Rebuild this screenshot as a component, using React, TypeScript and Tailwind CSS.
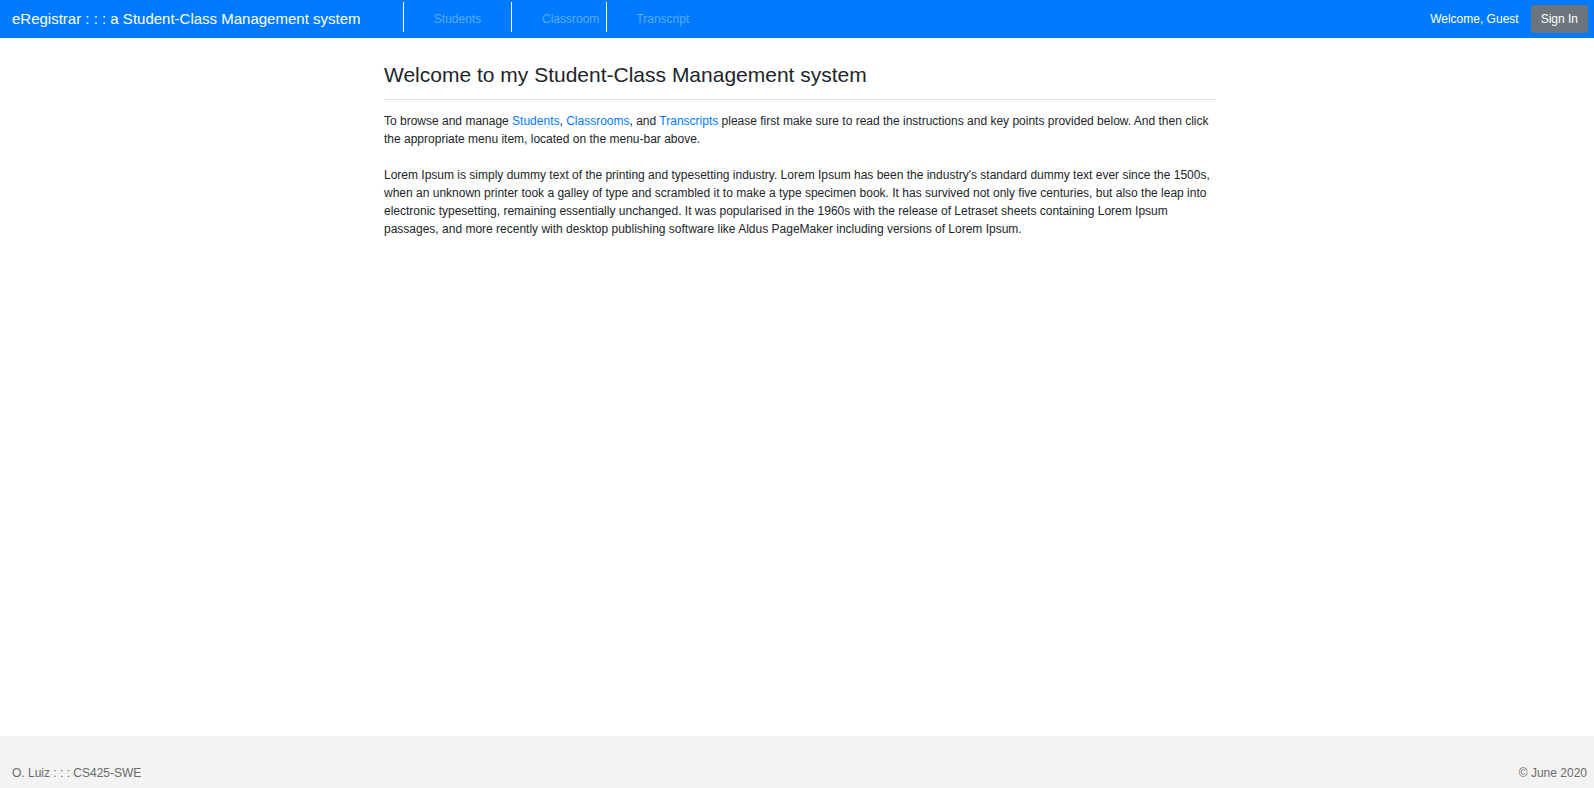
import React from "react";

export default function App() {
  const font = { fontFamily: '"Liberation Sans", Arial, sans-serif' };
  return (
    <div className="flex min-h-screen flex-col bg-white text-[#212529]" style={font}>
      <nav className="flex h-[38px] items-center bg-[#007bff]">
        <div className="w-[403px] pl-[12px] text-[15px] leading-[20px] text-white">
          eRegistrar : : : a Student-Class Management system
        </div>
        <div className="h-[30px] w-px self-start mt-[2px] bg-white" />
        <a className="w-[107px] text-center text-[12px] leading-[18px] text-[#5aa9ff]">Students</a>
        <div className="h-[30px] w-px self-start mt-[2px] bg-white" />
        <a className="pl-[30px] pr-[7px] text-[12px] leading-[18px] text-[#5aa9ff]">Classroom</a>
        <div className="h-[30px] w-px self-start mt-[2px] bg-white" />
        <a className="pl-[29px] text-[12px] leading-[18px] text-[#5aa9ff]">Transcript</a>
        <div className="ml-auto flex items-center gap-[12px] pr-[6px]">
          <span className="text-[12px] leading-[18px] text-white">Welcome, Guest</span>
          <button className="flex h-[28px] items-center rounded-[3px] bg-[#6c757d] px-[10px] text-[12px] text-white">
            Sign In
          </button>
        </div>
      </nav>

      <main className="flex-1">
        <div className="ml-[384px] w-[832px] pt-[25px]">
          <h1 className="text-[21px] leading-[24px] text-[#212529]">
            Welcome to my Student-Class Management system
          </h1>
          <hr className="mt-[12px] border-t border-[#e2e2e2]" />
          <p className="mt-[12px] text-[12px] leading-[18px]">
            To browse and manage <a className="text-[#007bff]">Students</a>,{" "}
            <a className="text-[#007bff]">Classrooms</a>, and{" "}
            <a className="text-[#007bff]">Transcripts</a> please first make sure to read the instructions and key
            points provided below. And then click the appropriate menu item, located on the menu-bar above.
          </p>
          <p className="mt-[18px] text-[12px] leading-[18px]">
            Lorem Ipsum is simply dummy text of the printing and typesetting industry. Lorem Ipsum has been the
            industry's standard dummy text ever since the 1500s, when an unknown printer took a galley of type and
            scrambled it to make a type specimen book. It has survived not only five centuries, but also the leap into
            electronic typesetting, remaining essentially unchanged. It was popularised in the 1960s with the release
            of Letraset sheets containing Lorem Ipsum passages, and more recently with desktop publishing software like
            Aldus PageMaker including versions of Lorem Ipsum.
          </p>
        </div>
      </main>

      <footer className="flex h-[52px] justify-between bg-[#f3f3f3] pl-[12px] pr-[7px] pt-[28px] text-[12px] leading-[18px] text-[#6a6a6a]">
        <span>O. Luiz : : : CS425-SWE</span>
        <span>© June 2020</span>
      </footer>
    </div>
  );
}
